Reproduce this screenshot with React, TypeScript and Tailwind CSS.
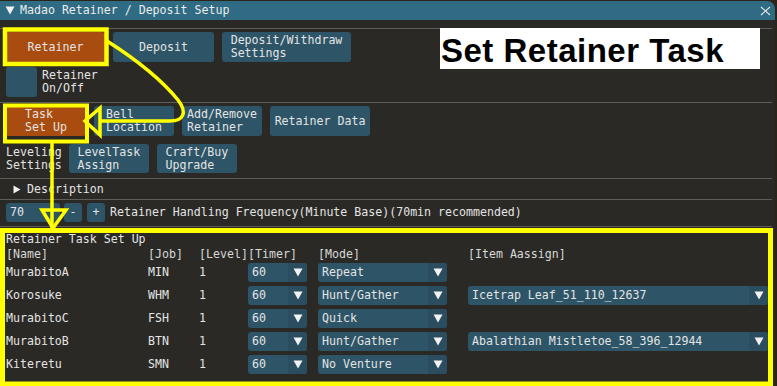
import React from 'react'

type Row = { name: string; job: string; mode: string; item?: string }

const rows: Row[] = [
  { name: 'MurabitoA', job: 'MIN', mode: 'Repeat' },
  { name: 'Korosuke', job: 'WHM', mode: 'Hunt/Gather', item: 'Icetrap Leaf_51_110_12637' },
  { name: 'MurabitoC', job: 'FSH', mode: 'Quick' },
  { name: 'MurabitoB', job: 'BTN', mode: 'Hunt/Gather', item: 'Abalathian Mistletoe_58_396_12944' },
  { name: 'Kiteretu', job: 'SMN', mode: 'No Venture' },
]

function Btn({ className, lines }: { className: string; lines: string[] }) {
  return (
    <div className={`flex items-center justify-center rounded-[3px] ${className}`}>
      <div className="text-left whitespace-pre">
        {lines.map((l) => (
          <div key={l}>{l}</div>
        ))}
      </div>
    </div>
  )
}

function Down() {
  return (
    <svg width="10" height="9" viewBox="0 0 10 9">
      <polygon points="0.5,0.5 9.5,0.5 5,8.5" fill="#f2f2f2" />
    </svg>
  )
}

function Combo({ className, text }: { className: string; text: string }) {
  return (
    <div className={`flex h-[19px] rounded-[3px] bg-[#2d5467] ${className}`}>
      <span className="flex-1 pl-[4px] leading-[19px] whitespace-pre overflow-hidden">{text}</span>
      <span className="flex w-[19px] items-center justify-center rounded-r-[3px] bg-[#2a4d5f]">
        <Down />
      </span>
    </div>
  )
}

function Sep() {
  return <div className="h-px w-[772px] -ml-[6px] bg-[#5c5c58]" />
}

export default function App() {
  return (
    <div className="relative h-[386px] w-[777px] overflow-hidden bg-[#2a2419] text-[#e4e4e4] [font-family:'DejaVu_Sans_Mono','Liberation_Mono',monospace] text-[11.6px] leading-[13px]">
      <div className="mt-px h-[420px] w-[775px] rounded-tr-[8px] bg-[#2a2925]">
        {/* title bar */}
        <div className="flex h-[19px] items-center rounded-tr-[8px] bg-[#2f6b83] pl-[5px] pr-[5px]">
          <svg width="10" height="9" viewBox="0 0 10 9">
            <polygon points="0.5,0.5 9.5,0.5 5,8.5" fill="#f0f0f0" />
          </svg>
          <span className="ml-[5px] flex-1 text-[#ececec]">Madao Retainer / Deposit Setup</span>
          <svg width="11" height="10" viewBox="0 0 11 10" className="mr-[-1px]">
            <path d="M1 1 L10 9 M10 1 L1 9" stroke="#e8e8e8" strokeWidth="1.1" />
          </svg>
        </div>

        <div className="pl-[6px]">
          <div className="mt-[8px]">
            <Sep />
          </div>

          <div className="mt-[3px] flex h-[30px] gap-[8px]">
            <Btn className="w-[99px] bg-[#a94c0f]" lines={['Retainer']} />
            <Btn className="w-[101px] bg-[#2d5467]" lines={['Deposit']} />
            <Btn className="w-[129px] bg-[#2d5467]" lines={['Deposit/Withdraw', 'Settings']} />
          </div>

          <div className="mt-[5px] flex h-[30px] items-center gap-[5px]">
            <div className="h-[30px] w-[31px] rounded-[3px] bg-[#2d5467]" />
            <div>
              <div>Retainer</div>
              <div>On/Off</div>
            </div>
          </div>

          <div className="mt-[5px]">
            <Sep />
          </div>

          <div className="mt-[3px] flex h-[30px] gap-[8px]">
            <Btn className="w-[80px] bg-[#a94c0f]" lines={['Task', 'Set Up']} />
            <Btn className="w-[80px] bg-[#2d5467]" lines={['Bell', 'Location']} />
            <Btn className="w-[80px] bg-[#2d5467]" lines={['Add/Remove', 'Retainer']} />
            <Btn className="w-[100px] bg-[#2d5467]" lines={['Retainer Data']} />
          </div>

          <div className="mt-[8px] flex h-[29px] items-center">
            <div>
              <div>Leveling</div>
              <div>Settings</div>
            </div>
            <div className="ml-[7px] flex h-[29px] gap-[8px]">
              <Btn className="w-[80px] bg-[#2d5467]" lines={['LevelTask', 'Assign']} />
              <Btn className="w-[80px] bg-[#2d5467]" lines={['Craft/Buy', 'Upgrade']} />
            </div>
          </div>

          <div className="mt-[5px]">
            <Sep />
          </div>

          <div className="flex h-[20px] items-center pl-[7px] pt-px">
            <svg width="8" height="9" viewBox="0 0 8 9">
              <polygon points="0.5,0.5 7.5,4.5 0.5,8.5" fill="#f0f0f0" />
            </svg>
            <span className="ml-[6px]">Description</span>
          </div>

          <Sep />

          <div className="mt-[3px] flex h-[19px] items-center">
            <div className="h-[19px] w-[54px] rounded-[3px] bg-[#2d5467] pl-[4px] leading-[19px]">70</div>
            <div className="ml-[4px] flex h-[19px] w-[18px] items-center justify-center rounded-[3px] bg-[#2d5467]">-</div>
            <div className="ml-[5px] flex h-[19px] w-[18px] items-center justify-center rounded-[3px] bg-[#2d5467]">+</div>
            <span className="ml-[5px] whitespace-pre">Retainer Handling Frequency(Minute Base)(70min recommended)</span>
          </div>

          <div className="mt-[4px]">
            <Sep />
          </div>

          <div className="mt-[6px]">Retainer Task Set Up</div>

          <div className="mt-[2px] grid grid-cols-[142px_51px_49px_70px_150px_300px] text-[#d8d8d8]">
            <span>[Name]</span>
            <span>[Job]</span>
            <span>[Level]</span>
            <span>[Timer]</span>
            <span>[Mode]</span>
            <span>[Item Aassign]</span>
          </div>

          <div className="mt-[2px] flex flex-col gap-[4px]">
            {rows.map((r) => (
              <div key={r.name} className="grid h-[19px] grid-cols-[142px_51px_49px_70px_150px_300px] items-center">
                <span>{r.name}</span>
                <span>{r.job}</span>
                <span>1</span>
                <Combo className="w-[59px]" text="60" />
                <Combo className="w-[129px]" text={r.mode} />
                {r.item ? <Combo className="w-[300px]" text={r.item} /> : <span />}
              </div>
            ))}
          </div>
        </div>
      </div>

      {/* annotation label */}
      <div className="absolute left-[440px] top-[28px] h-[41px] w-[320px] bg-white pl-[1px] pt-[6px] text-black [font-family:'Liberation_Sans',Arial,sans-serif] text-[33px] font-bold leading-[33px] tracking-[0.5px]">
        Set Retainer Task
      </div>

      {/* yellow annotation marks */}
      <svg className="pointer-events-none absolute left-0 top-0" width="777" height="386" viewBox="0 0 777 386">
        <g fill="none" stroke="#ffff00" strokeLinejoin="miter">
          <rect x="5" y="29.5" width="101.5" height="34.5" strokeWidth="4.5" />
          <rect x="5" y="105.5" width="82" height="36" strokeWidth="4" />
          <rect x="2.5" y="230.5" width="768" height="153.5" strokeWidth="5" />
          <path d="M107 41 C 140 62, 165 84, 178 100 C 188 113, 183 121, 170 121 L 100 121" strokeWidth="3.5" />
          <polygon points="85,121 100,108 100,135" strokeWidth="3.5" />
          <path d="M52 143 L 52 228" strokeWidth="3.5" />
          <polygon points="42,210 66,210 53,228" strokeWidth="3.5" />
        </g>
      </svg>
    </div>
  )
}
